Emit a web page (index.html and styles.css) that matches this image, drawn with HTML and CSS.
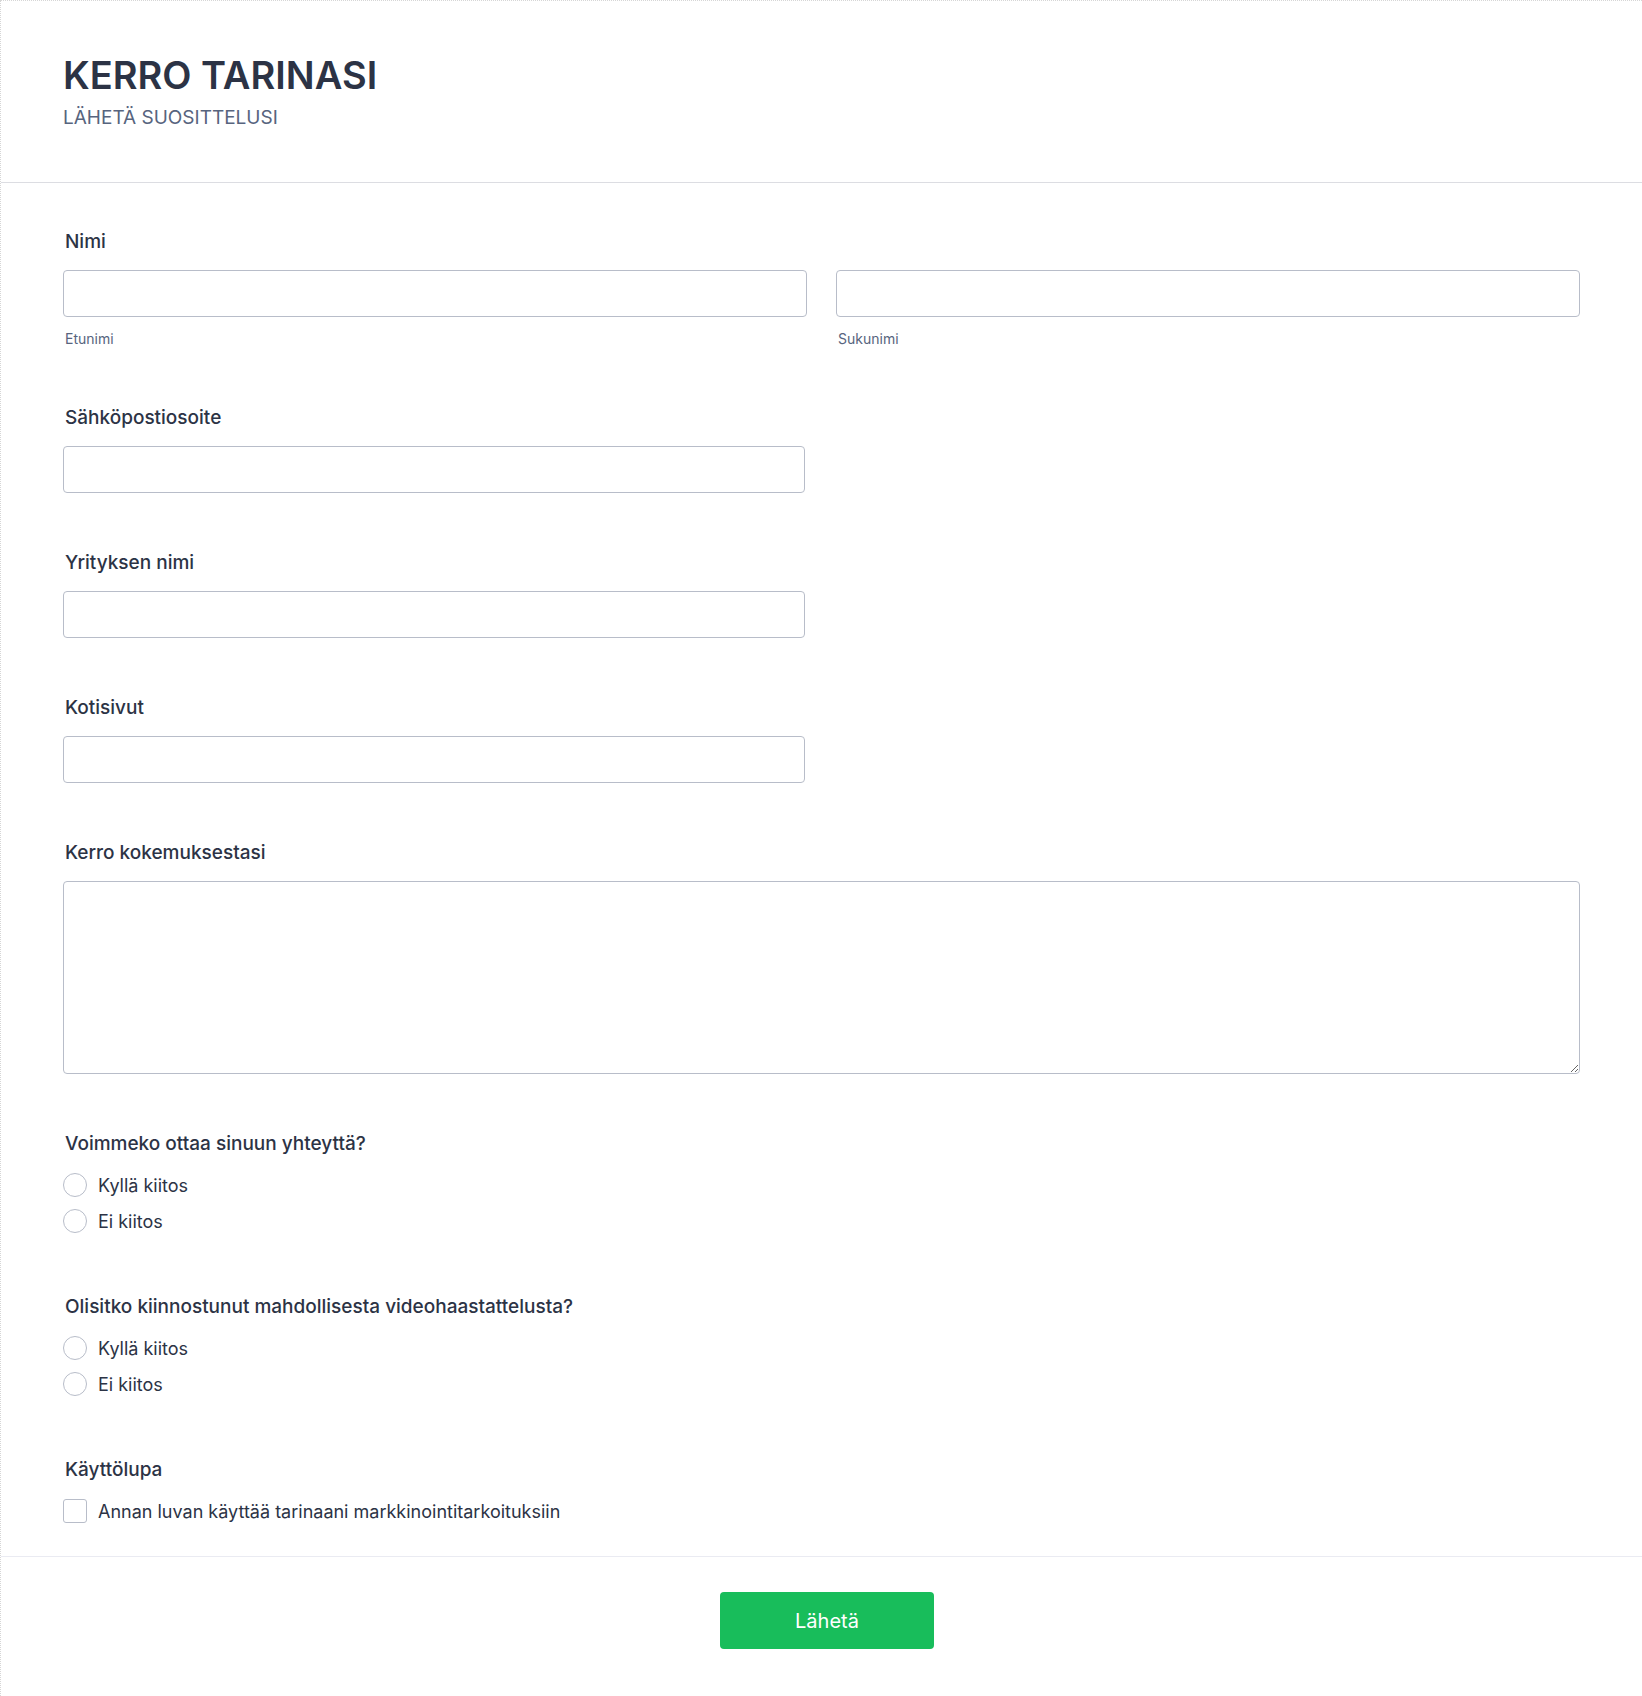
FILE: index.html
```html
<!DOCTYPE html>
<html lang="fi">

<head>
  <meta charset="UTF-8">
  <meta name="viewport" content="width=device-width, initial-scale=1.0">
  <title>Kerro tarinasi</title>
  <link rel="stylesheet" href="styles.css">
</head>

<body>
  <div class="page">
    <div class="form-header">
      <h1 class="form-title">KERRO TARINASI</h1>
      <div class="form-subtitle">LÄHETÄ SUOSITTELUSI</div>
    </div>

    <form class="form-body">
      <div class="field">
        <label class="field-label">Nimi</label>
        <div class="name-row">
          <div class="name-part">
            <input type="text" class="text-input" id="first_name">
            <span class="sublabel">Etunimi</span>
          </div>
          <div class="name-part">
            <input type="text" class="text-input" id="last_name">
            <span class="sublabel">Sukunimi</span>
          </div>
        </div>
      </div>

      <div class="field">
        <label class="field-label" for="email">Sähköpostiosoite</label>
        <input type="email" class="text-input half" id="email">
      </div>

      <div class="field">
        <label class="field-label" for="company">Yrityksen nimi</label>
        <input type="text" class="text-input half" id="company">
      </div>

      <div class="field">
        <label class="field-label" for="website">Kotisivut</label>
        <input type="text" class="text-input half" id="website">
      </div>

      <div class="field">
        <label class="field-label" for="story">Kerro kokemuksestasi</label>
        <textarea class="text-area" id="story"></textarea>
      </div>

      <div class="field choice">
        <span class="field-label">Voimmeko ottaa sinuun yhteyttä?</span>
        <div class="options">
          <label class="option"><input type="radio" name="contact"><span>Kyllä kiitos</span></label>
          <label class="option"><input type="radio" name="contact"><span>Ei kiitos</span></label>
        </div>
      </div>

      <div class="field choice">
        <span class="field-label">Olisitko kiinnostunut mahdollisesta videohaastattelusta?</span>
        <div class="options">
          <label class="option"><input type="radio" name="video"><span>Kyllä kiitos</span></label>
          <label class="option"><input type="radio" name="video"><span>Ei kiitos</span></label>
        </div>
      </div>

      <div class="field choice last">
        <span class="field-label">Käyttölupa</span>
        <div class="options">
          <label class="option"><input type="checkbox" class="check"><span>Annan luvan käyttää tarinaani markkinointitarkoituksiin</span></label>
        </div>
      </div>
    </form>

    <div class="form-footer">
      <button type="button" class="submit-btn">Lähetä</button>
    </div>
  </div>
</body>

</html>
```

FILE: styles.css
```css
body {
  margin: 0;
  padding: 0;
  font-family: Inter, "Noto Sans", sans-serif;
  color: #2c3345;
  background-color: #fff;
}

.page {
  min-height: 100vh;
  box-sizing: border-box;
  border-top: 1px dotted #d6d6d6;
  border-left: 1px dotted #d6d6d6;
}

.form-header {
  padding: 50px 62px 52px;
  border-bottom: 1px solid #dcdde2;
}

.form-title {
  margin: 0;
  font-size: 38px;
  line-height: 48px;
  font-weight: 600;
  color: #2c3345;
}

.form-subtitle {
  margin-top: 7px;
  font-size: 19px;
  line-height: 24px;
  color: #57647e;
}

.form-body {
  padding: 45px 62px 31px;
}

.field {
  display: flex;
  flex-direction: column;
  margin-bottom: 56px;
}

.field.choice {
  margin-bottom: 58px;
}

.field.last {
  margin-bottom: 0;
}

.field-label {
  display: block;
  padding-left: 2px;
  margin-bottom: 14px;
  font-size: 19px;
  line-height: 28px;
  font-weight: 500;
  color: #2c3345;
}

.choice .field-label {
  margin-bottom: 16px;
}

.name-row {
  display: grid;
  grid-template-columns: 1fr 1fr;
  gap: 29px;
}

.name-part {
  display: flex;
  flex-direction: column;
}

.text-input {
  box-sizing: border-box;
  width: 100%;
  height: 47px;
  margin: 0;
  border: 1px solid #b8bdc9;
  border-radius: 4px;
  font: inherit;
}

.text-input.half {
  width: calc((100% - 29px) / 2 - 2px);
}

.sublabel {
  margin-top: 13px;
  padding-left: 2px;
  font-size: 14px;
  line-height: 18px;
  color: #57647e;
}

.text-area {
  box-sizing: border-box;
  width: 100%;
  height: 193px;
  margin: 0;
  border: 1px solid #b8bdc9;
  border-radius: 4px;
  font: inherit;
}

.options {
  display: flex;
  flex-direction: column;
  gap: 8px;
  margin-top: -3px;
}

.option {
  display: flex;
  align-items: center;
  gap: 11px;
  height: 28px;
  font-size: 18px;
  color: #2c3345;
}

.option input {
  appearance: none;
  box-sizing: border-box;
  width: 24px;
  height: 24px;
  margin: 0;
  border: 1px solid #b8bdc9;
  border-radius: 50%;
  background: #fff;
}

.option input.check {
  border-radius: 3px;
}

.form-footer {
  display: flex;
  justify-content: center;
  padding: 35px 0 47px;
  border-top: 1px solid #eaebf2;
}

.submit-btn {
  width: 214px;
  height: 57px;
  margin-left: 11px;
  border: none;
  border-radius: 4px;
  background-color: #18bd5b;
  color: #fff;
  font-family: Inter, "Noto Sans", sans-serif;
  font-size: 20px;
  font-weight: 400;
  cursor: pointer;
}
```
